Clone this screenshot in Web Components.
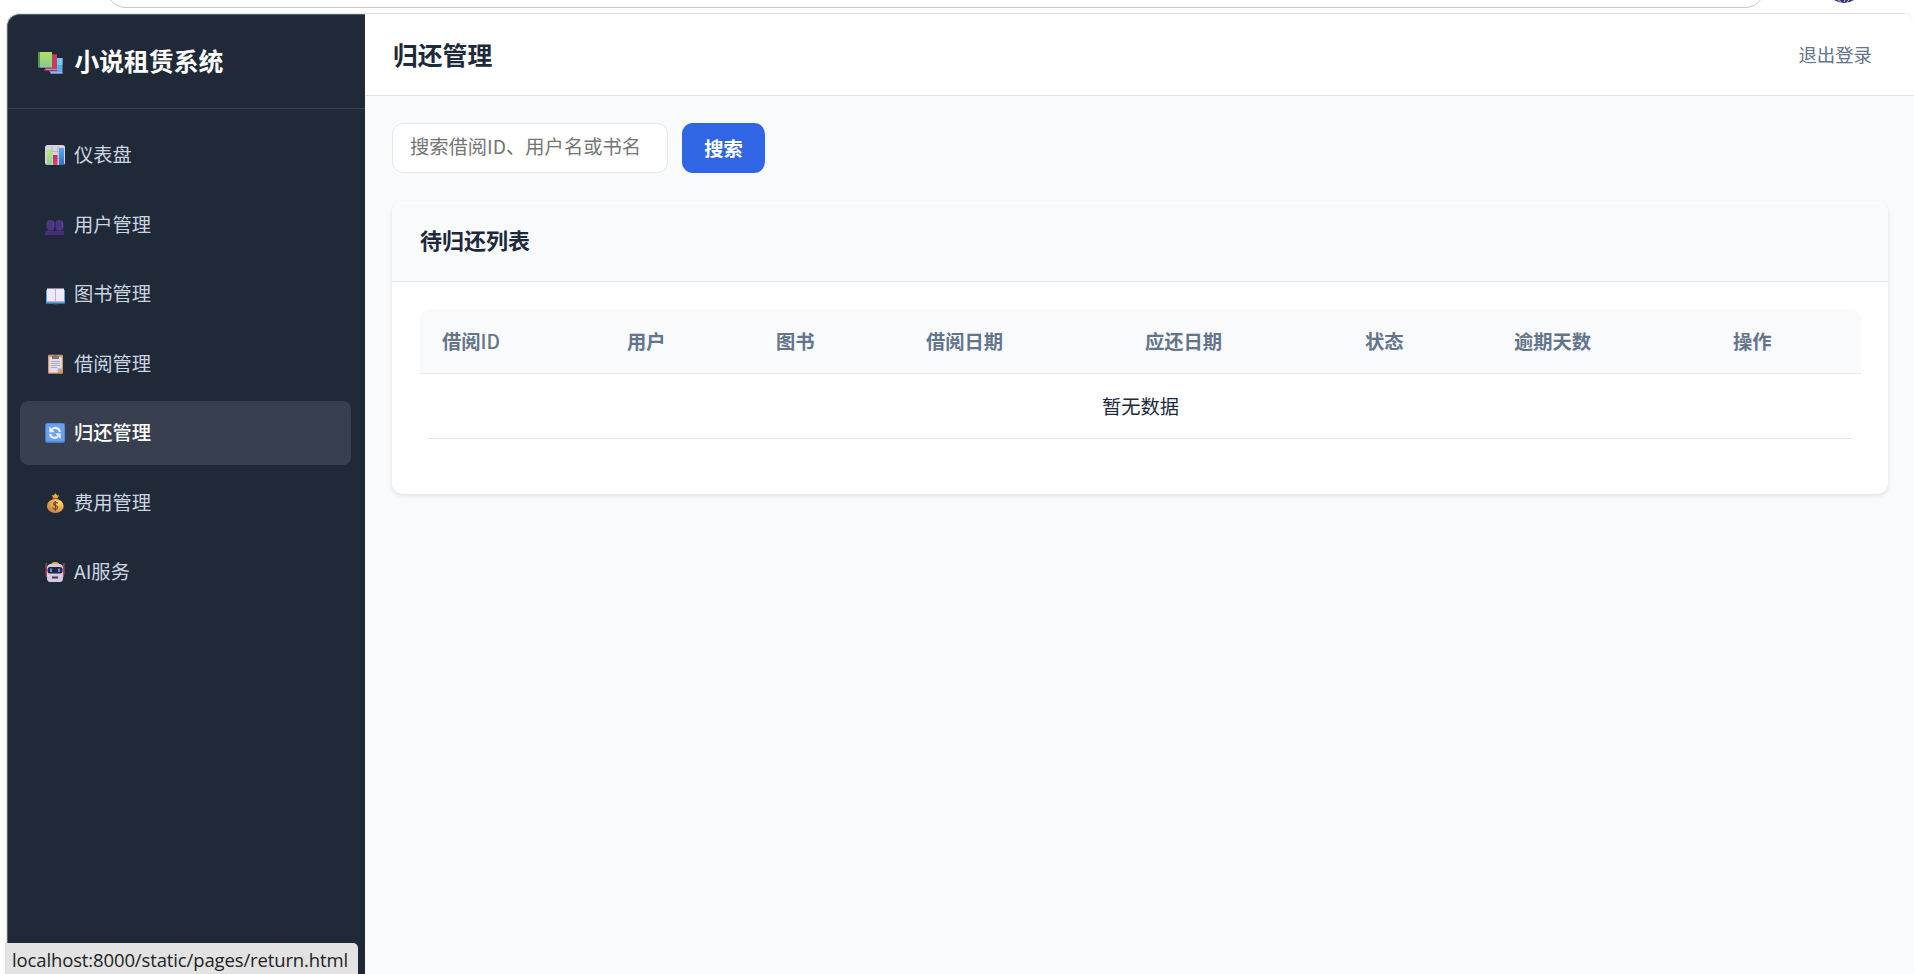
<!DOCTYPE html>
<html lang="zh-CN">
<head>
<meta charset="utf-8">
<title>归还管理</title>
<style>
  body {
    margin: 0;
    height: 974px;
    overflow: hidden;
    background: #fff;
    font-family: "Noto Sans CJK SC", sans-serif;
    font-size: 19.3px;
    line-height: 28px;
    color: #1e293b;
  }
</style>
</head>
<body>
<rental-app>
  <browser-strip slot="browser"></browser-strip>
  <side-bar slot="sidebar" heading="小说租赁系统">
    <nav-item icon="chart">仪表盘</nav-item>
    <nav-item icon="users">用户管理</nav-item>
    <nav-item icon="book">图书管理</nav-item>
    <nav-item icon="clipboard">借阅管理</nav-item>
    <nav-item icon="refresh" active>归还管理</nav-item>
    <nav-item icon="money">费用管理</nav-item>
    <nav-item icon="robot">AI服务</nav-item>
  </side-bar>
  <page-header slot="header" action="退出登录">归还管理</page-header>
  <search-bar placeholder="搜索借阅ID、用户名或书名">搜索</search-bar>
  <data-card heading="待归还列表">
    <return-table></return-table>
  </data-card>
  <status-tip slot="status">localhost:8000/static/pages/return.html</status-tip>
</rental-app>

<script>
const icons = {
  books: `
    <path fill="#57aee8" d="M11.5 6H24.500v14H11.500z"/>
    <path fill="#74c8ee" d="M19 6h5.500v7H19z"/>
    <path fill="#4b72bd" d="M12 20h12.500v2H12z"/>
    <path fill="#cac6e8" d="M13 20.300h11.500v.9H13z"/>
    <path fill="#c93b5c" d="M7 2.200h12v15.300H7z"/>
    <path fill="#a72f58" d="M6 17h13v2H6z"/>
    <path fill="#dba9c5" d="M8 17.200h11v.9H8z"/>
    <path fill="url(#g)" d="M0 0h14v14.500H0z"/>
    <path fill="#62914d" d="M0 0h2v15H0z"/>
    <path fill="#508b70" d="M.5 14h13.500v2H.5z"/>
    <path fill="#bfc8d0" d="M2 14.300h12v.9H2z"/>
    <linearGradient id="g" x2="0" y2="1"><stop stop-color="#b2df66"/><stop offset="1" stop-color="#86cf89"/></linearGradient>`,
  chart: `
    <rect width="20" height="20" rx="2.500" fill="#d8d3de"/>
    <path stroke="#b4adbd" stroke-width=".7" d="M1 6.500h18M1 13h18M7 1v18M13 1v18"/>
    <path fill="url(#a)" d="M2 5h4.500v15H2z"/>
    <path fill="url(#b)" d="M8 10h4.500v10H8z"/>
    <path fill="url(#c)" d="M14 3h5v17h-5z"/>
    <linearGradient id="a" x2="0" y2="1"><stop stop-color="#bce75c"/><stop offset="1" stop-color="#7ed69a"/></linearGradient>
    <linearGradient id="b" x2="0" y2="1"><stop stop-color="#b93265"/><stop offset="1" stop-color="#db4a68"/></linearGradient>
    <linearGradient id="c" x2="0" y2="1"><stop stop-color="#55aaf1"/><stop offset="1" stop-color="#3a6fbd"/></linearGradient>`,
  users: `
    <g fill="#4d3483"><rect x="1.500" y="5" width="8" height="10.500" rx="3.700"/><rect x="10.500" y="5" width="8" height="10.500" rx="3.700"/></g>
    <path fill="#4a2e7c" d="M0 20v-1.500q0-3 3-3h5q2 0 2 2 0-2 2-2h4.500q2.500 0 2.500 3V20z"/>
    <path stroke="#60439a" stroke-width="1" d="M8.500 7v5M17.500 7v5"/>`,
  book: `
    <path fill="#4faae7" d="M1 6h19v14H1z"/>
    <path fill="#2476bd" d="M1 18.500h19V20h-7l-2.500.5L8 20H1z"/>
    <path fill="#eeeaf7" d="M2 4.500h8.500v13H2zM10.500 4.500H19v13h-8.500z"/>
    <path fill="#beb3d2" d="M2 17h17v1.300H2zM9.900 5h1.100v12.500H9.900z"/>`,
  clipboard: `
    <rect x="3" y=".8" width="15" height="19" rx="1" fill="#d59760"/>
    <path fill="#e3dcec" d="M4.200 3h12.600v11.500l-4 4H4.200z"/>
    <path fill="#b0a4b9" d="M16.800 14.500l-4 4v-4z"/>
    <path stroke="#aaa1b4" stroke-width=".9" d="M6 7.500h9M6 9.500h9M6 11.500h9M6 13.500h6"/>
    <path fill="#806f7c" d="M7 2h2.300q1.200-2.500 2.400 0H14v3H7z"/>`,
  refresh: `
    <rect width="20" height="20" rx="2" fill="#4679d0"/>
    <rect x="1" y=".5" width="18.500" height="18" rx="1.500" fill="#67a1ef"/>
    <path fill="none" stroke="#f0edff" stroke-width="2.300" d="M7 6.200q3-2.200 5.700-.7Q15 7 14.600 9M13 13.500q-3 2.200-5.700.7Q5 12.700 5.400 10.700"/>
    <path fill="#f0edff" d="M4.300 3.500v5.700h5.500zM15.700 16v-5.700h-5.500z"/>`,
  money: `
    <path fill="#a6572e" d="M7.500 3.500h5v3h-5z"/>
    <path fill="#f3ae43" d="M6.500 2l2 .5L10.500.3l1.700 2.200 2-.2-1.500 2.500h-4z"/>
    <ellipse cx="10.300" cy="13" rx="8.400" ry="7" fill="url(#m)"/>
    <path fill="none" stroke="#77502f" stroke-width="1.300" d="M12.700 10.300q-1-1.300-3-.9-1.700.5-1 2 .5 1 2 1.300 2.300.6 1.800 2.200-.7 1.600-2.800 1.200-1.500-.2-2-1.500M10.400 8v10"/>
    <radialGradient id="m" cx=".7" cy=".25" r=".9"><stop stop-color="#ffdb69"/><stop offset="1" stop-color="#cb7440"/></radialGradient>`,
  robot: `
    <path fill="#bd3e65" d="M.5 1h1.300v8l1 1v5H1q-1-4-.5-7zM19.500 1h-1.300v8l-1 1v5H19q1-4 .5-7z"/>
    <path fill="#eab044" d="M6 3q0-3 4.200-3t4.200 3z"/>
    <path fill="#d6cae2" d="M2 6q0-4 4-4h8q4 0 4 4v10q0 4-3 4H5q-3 0-3-4z"/>
    <rect x="2.500" y="5" width="15" height="6.500" rx="2.500" fill="#292540"/>
    <path stroke="#45a9dc" stroke-width="1.800" d="M6 6.500v3.600M14 6.500v3.600"/>
    <path fill="#43384f" d="M7 14.500h6v2H7z"/>`
};

class ShadowElement extends HTMLElement {
  constructor() {
    super();
    this.attachShadow({ mode: "open" });
  }

  connectedCallback() {
    this.shadowRoot.innerHTML = `<style>${this.constructor.styles}</style>${this.render()}`;
  }
}

class EmojiIcon extends ShadowElement {
  static get styles() {
    return `
      :host { display: block; flex: none; width: 20px; height: 20px; }
      :host([name="books"]) { width: 25px; height: 22px; margin-top: 2px; }
      svg { display: block; width: 100%; height: 100%; overflow: visible; }
    `;
  }

  render() {
    const name = this.getAttribute("name");
    return `<svg viewBox="${name === "books" ? "0 0 25 22" : "0 0 20 20"}">${icons[name]}</svg>`;
  }
}

class RentalApp extends ShadowElement {
  static get styles() {
    return `
      :host { display: block; position: relative; height: 974px; }
      .window {
        display: grid;
        grid-template-columns: 358px 1fr;
        box-sizing: border-box;
        height: 961px;
        margin-left: 6px;
        border: solid #e1e2e3;
        border-width: 1px 0 0 1px;
        border-radius: 13px 10px 0 0;
        overflow: hidden;
      }
      .main { display: flex; flex-direction: column; background: #f8fafc; }
      .content { flex: 1; padding: 27px 26px 0 27px; }
    `;
  }

  render() {
    return `
      <slot name="browser"></slot>
      <div class="window">
        <slot name="sidebar"></slot>
        <div class="main">
          <slot name="header"></slot>
          <div class="content"><slot></slot></div>
        </div>
      </div>
      <slot name="status"></slot>`;
  }
}

class BrowserStrip extends ShadowElement {
  static get styles() {
    return `
      :host { display: flex; height: 13px; overflow: hidden; background: #fff; }
      .address {
        box-sizing: border-box;
        width: 1659px;
        height: 40px;
        margin: -32px 0 0 106px;
        border: 1px solid #c8c9ca;
        border-radius: 20px;
      }
      svg { width: 22px; height: 4px; margin-left: 68px; }
    `;
  }

  render() {
    return `
      <div class="address"></div>
      <svg viewBox="0 0 22 4">
        <path fill="#30306d" d="M1 0h20q-5 3-10 3T1 0z"/>
        <path stroke="#c8c5ee" d="M5 .5l3 1M12 0l-1 2M16 0l-2 2"/>
      </svg>`;
  }
}

class SideBar extends ShadowElement {
  static get styles() {
    return `
      :host {
        display: block;
        box-sizing: border-box;
        background: #202938;
        border: solid #5c656e;
        border-width: 1px 0 0 1px;
        border-top-left-radius: 12px;
      }
      .logo {
        display: flex;
        align-items: center;
        gap: 11.500px;
        box-sizing: border-box;
        height: 94px;
        padding: 0 0 0 30px;
        border-bottom: 1px solid #364152;
        color: #fff;
        font-size: 24.800px;
        font-weight: 700;
      }
      .logo span { padding-bottom: 3px; }
      nav {
        display: flex;
        flex-direction: column;
        gap: 5.500px;
        padding: 14px 14px 0 12px;
      }
    `;
  }

  render() {
    return `
      <div class="logo"><emoji-icon name="books"></emoji-icon><span>${this.getAttribute("heading")}</span></div>
      <nav><slot></slot></nav>`;
  }
}

class NavItem extends ShadowElement {
  static get styles() {
    return `
      :host {
        display: flex;
        align-items: center;
        gap: 9px;
        height: 64px;
        padding-left: 25px;
        border-radius: 8px;
        color: #cbd5e1;
      }
      :host([active]) { background: #383f4e; color: #fff; font-weight: 500; }
      span { padding-bottom: 2px; }
    `;
  }

  render() {
    return `<emoji-icon name="${this.getAttribute("icon")}"></emoji-icon><span><slot></slot></span>`;
  }
}

class PageHeader extends ShadowElement {
  static get styles() {
    return `
      :host {
        display: flex;
        align-items: center;
        justify-content: space-between;
        box-sizing: border-box;
        height: 82px;
        padding: 0 42px 2px 28px;
        border-bottom: 1px solid #e2e4ea;
        background: #fff;
      }
      h1 { margin: 0; font-size: 24.800px; font-weight: 700; }
      a { color: #64748b; font-size: 18.400px; }
    `;
  }

  render() {
    return `<h1><slot></slot></h1><a>${this.getAttribute("action")}</a>`;
  }
}

class SearchBar extends ShadowElement {
  static get styles() {
    return `
      :host { display: flex; gap: 14px; margin-bottom: 28px; }
      input, button {
        box-sizing: border-box;
        height: 50px;
        margin: 0;
        border-radius: 11px;
        font: inherit;
      }
      input {
        width: 276px;
        padding: 0 17px 4px;
        border: 1px solid #e2e8f0;
        background: #fff;
      }
      input::placeholder { color: #757575; }
      button {
        width: 83px;
        padding: 0;
        border: 0;
        background: #3065e4;
        color: #fff;
        font-weight: 700;
      }
    `;
  }

  render() {
    return `<input placeholder="${this.getAttribute("placeholder")}"><button><slot></slot></button>`;
  }
}

class DataCard extends ShadowElement {
  static get styles() {
    return `
      :host {
        display: block;
        box-sizing: border-box;
        height: 293px;
        border-radius: 11px;
        background: #fff;
        box-shadow: 0 2px 4px rgba(0, 0, 0, .1);
        overflow: hidden;
      }
      h2 {
        box-sizing: border-box;
        height: 81px;
        margin: 0;
        padding: 24px 28px;
        border-bottom: 1px solid #e2e8f0;
        background: #f8fafc;
        font-size: 22px;
        font-weight: 700;
      }
      .body { padding: 27px 27px 0 28px; }
    `;
  }

  render() {
    return `<h2>${this.getAttribute("heading")}</h2><div class="body"><slot></slot></div>`;
  }
}

class ReturnTable extends ShadowElement {
  static get styles() {
    return `
      :host { display: block; }
      .head {
        display: grid;
        grid-template-columns: 185px 149px 150px 219px 220px 149px 219px 1fr;
        align-items: center;
        box-sizing: border-box;
        height: 65px;
        padding-left: 22px;
        border-bottom: 1px solid #e2e8f0;
        border-radius: 11px 11px 0 0;
        background: #f8fafc;
        color: #64748b;
        font-weight: 700;
      }
      .head .latin { font-weight: 500; }
      .empty {
        box-sizing: border-box;
        height: 65px;
        margin: 0 8px;
        padding-top: 18px;
        border-bottom: 1px solid #dfe6ee;
        text-align: center;
      }
    `;
  }

  render() {
    const columns = ['借阅<span class="latin">ID</span>', "用户", "图书", "借阅日期", "应还日期", "状态", "逾期天数", "操作"];
    return `
      <div class="head">${columns.map((column) => `<div>${column}</div>`).join("")}</div>
      <div class="empty">暂无数据</div>`;
  }
}

class StatusTip extends ShadowElement {
  static get styles() {
    return `
      :host {
        position: absolute;
        left: 5px;
        bottom: 0;
        box-sizing: border-box;
        width: 353px;
        height: 31px;
        padding-left: 7px;
        border-radius: 0 5px 0 0;
        background: #e3e3e3;
        color: #222;
        font: 18.500px/34px "Open Sans", sans-serif;
        letter-spacing: -.13px;
        white-space: nowrap;
      }
    `;
  }

  render() {
    return "<slot></slot>";
  }
}

customElements.define("emoji-icon", EmojiIcon);
customElements.define("rental-app", RentalApp);
customElements.define("browser-strip", BrowserStrip);
customElements.define("side-bar", SideBar);
customElements.define("nav-item", NavItem);
customElements.define("page-header", PageHeader);
customElements.define("search-bar", SearchBar);
customElements.define("data-card", DataCard);
customElements.define("return-table", ReturnTable);
customElements.define("status-tip", StatusTip);
</script>
</body>
</html>
